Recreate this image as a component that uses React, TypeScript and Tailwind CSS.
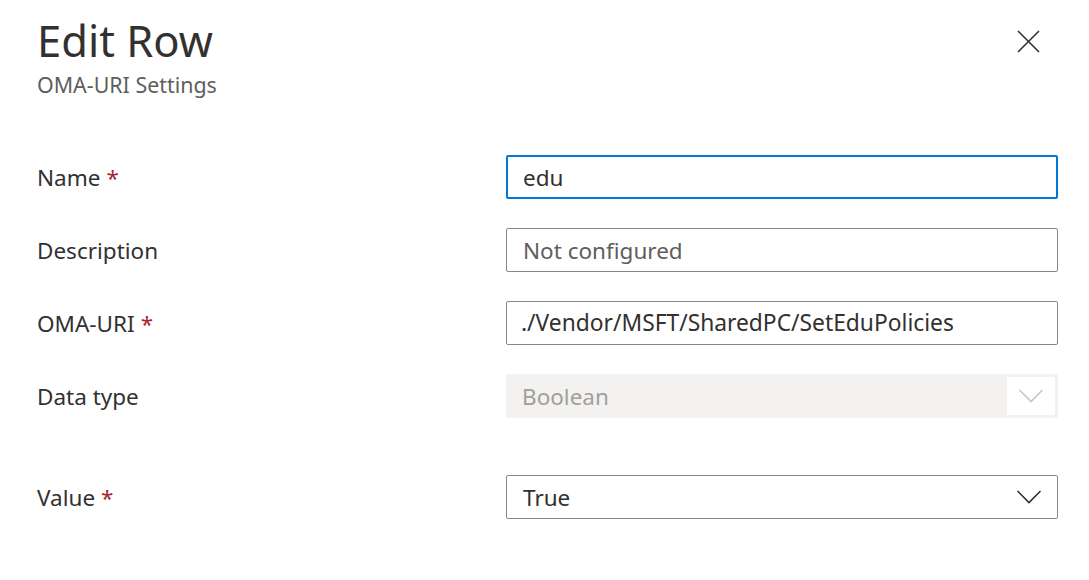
import React from "react";

const Chevron = ({ color }: { color: string }) => (
  <svg width="26" height="16" viewBox="0 0 26 16" fill="none">
    <path d="M1.5 2 L13 13.5 L24.5 2" stroke={color} strokeWidth="1.6" />
  </svg>
);

const Label = ({ text, req }: { text: string; req?: boolean }) => (
  <div className="flex-1 text-[22.5px] text-[#323130] pt-[2px]">
    {text}
    {req && <span className="text-[#a4262c] ml-[6px]">*</span>}
  </div>
);

export default function App() {
  return (
    <div
      className="w-[1089px] h-[580px] bg-white pl-[37px] pr-[31px] pt-[13px] relative"
      style={{ fontFamily: '"Noto Sans", "Open Sans", sans-serif' }}
    >
      <button className="absolute left-[1017px] top-[30px] w-[23px] h-[23px]">
        <svg width="23" height="23" viewBox="0 0 23 23">
          <path d="M1 1 L22 22 M22 1 L1 22" stroke="#323130" strokeWidth="1.6" />
        </svg>
      </button>
      <div className="text-[43.5px] leading-[54px] text-[#323130]">Edit Row</div>
      <div className="text-[21.4px] leading-[28px] text-[#605e5c] mt-[4px]">OMA-URI Settings</div>

      <div className="mt-[56px] flex flex-col">
        <div className="flex items-center h-[44px]">
          <Label text="Name" req />
          <div className="w-[552px] h-[44px] border-2 border-[#0078d4] rounded-[2px] flex items-center pl-[15px] text-[22.5px] text-[#323130] pt-[1px]">
            edu
          </div>
        </div>
        <div className="flex items-center h-[44px] mt-[29px]">
          <Label text="Description" />
          <div className="w-[552px] h-[44px] border border-[#8a8886] rounded-[2px] flex items-center pl-[16px] text-[22.5px] text-[#605e5c] pt-[1px]">
            Not configured
          </div>
        </div>
        <div className="flex items-center h-[44px] mt-[29px]">
          <Label text="OMA-URI" req />
          <div className="w-[552px] h-[44px] border border-[#8a8886] rounded-[2px] flex items-center pl-[14px] text-[22.8px] text-[#323130] pt-[1px]">
            ./Vendor/MSFT/SharedPC/SetEduPolicies
          </div>
        </div>
        <div className="flex items-center h-[44px] mt-[29px]">
          <Label text="Data type" />
          <div className="w-[552px] h-[44px] bg-[#f3f2f1] rounded-[2px] flex items-center pl-[16px] pr-[3px] text-[22.5px] text-[#a19f9d]">
            <span className="flex-1 pt-[1px]">Boolean</span>
            <div className="w-[48px] h-[38px] bg-white flex items-center justify-center">
              <Chevron color="#c8c6c4" />
            </div>
          </div>
        </div>
        <div className="flex items-center h-[44px] mt-[57px]">
          <Label text="Value" req />
          <div className="w-[552px] h-[44px] border border-[#8a8886] rounded-[2px] flex items-center pl-[16px] pr-[15px] text-[22.5px] text-[#323130]">
            <span className="flex-1 pt-[1px]">True</span>
            <Chevron color="#323130" />
          </div>
        </div>
      </div>
    </div>
  );
}
